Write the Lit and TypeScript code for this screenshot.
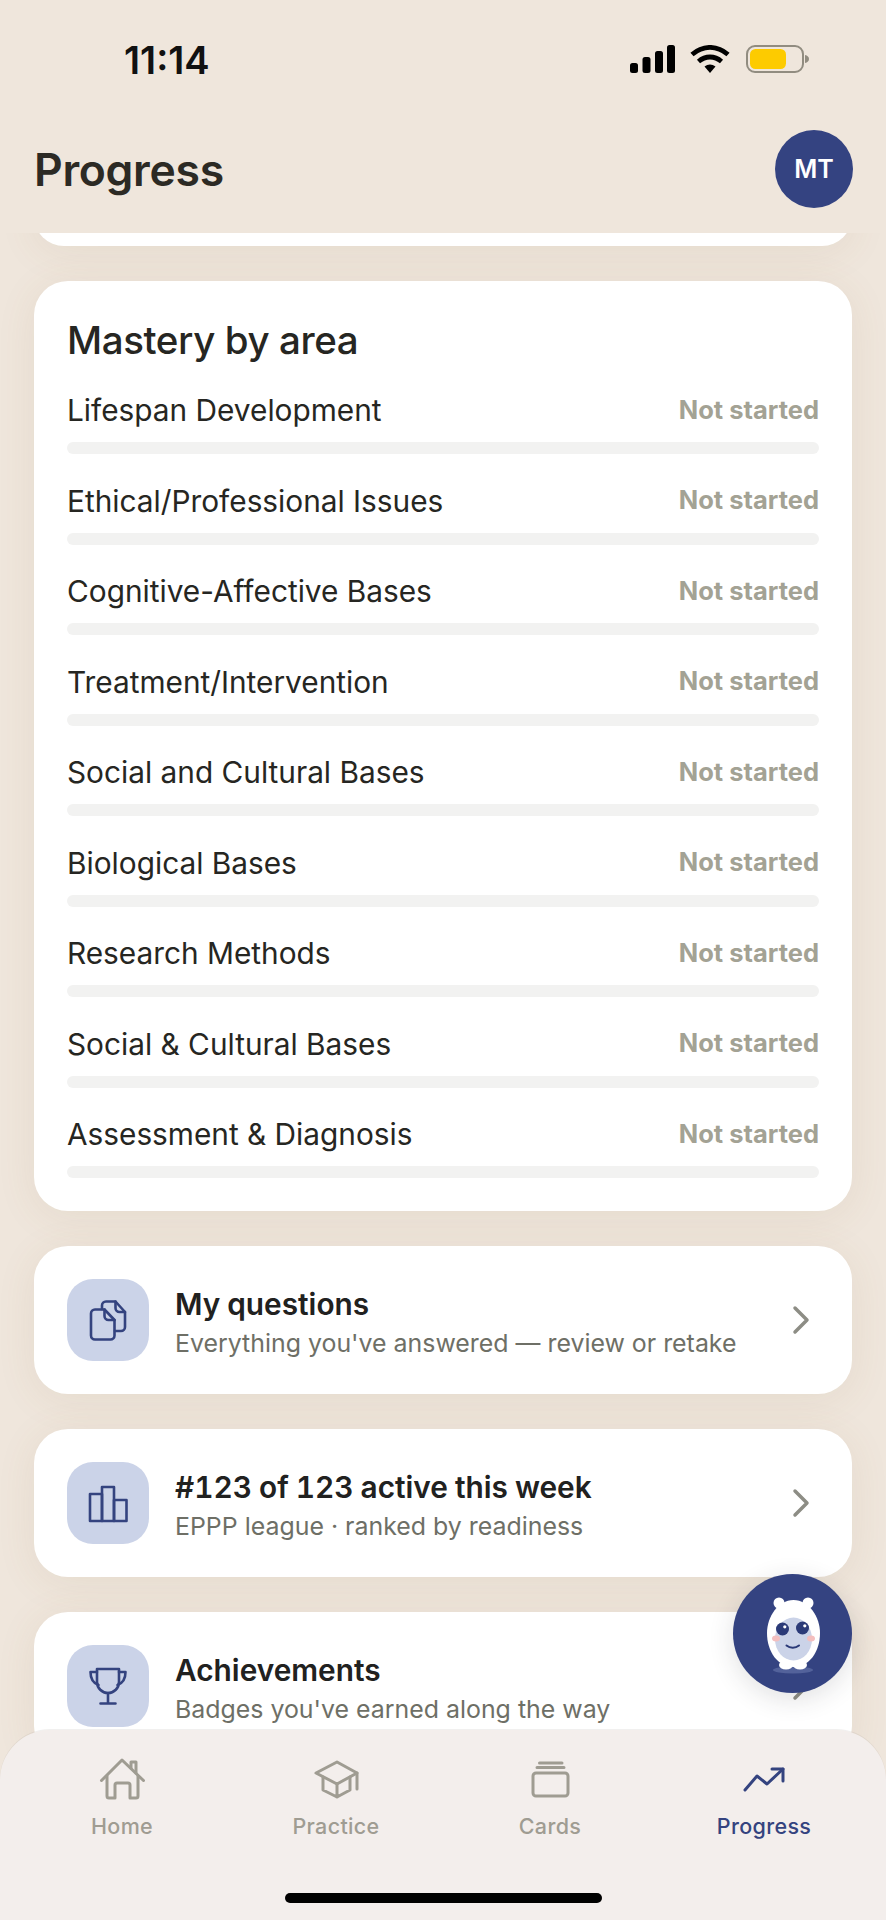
import { LitElement, html, css, svg } from 'lit';
import { customElement } from 'lit/decorators.js';

const AREAS = [
  'Lifespan Development',
  'Ethical/Professional Issues',
  'Cognitive-Affective Bases',
  'Treatment/Intervention',
  'Social and Cultural Bases',
  'Biological Bases',
  'Research Methods',
  'Social & Cultural Bases',
  'Assessment & Diagnosis',
];

// tile glyphs, drawn in the tile's own 82 unit box
const docsIcon = svg`
  <path d="M28 30.5h9.5L47.5 41v15.5a4 4 0 0 1-4 4H28a4 4 0 0 1-4-4v-22a4 4 0 0 1 4-4z" />
  <path d="M37.5 30.5V37a4 4 0 0 0 4 4h6" />
  <path d="M35 30v-3.5a4 4 0 0 1 4-4h9.5L58 33v15a4 4 0 0 1-4 4h-6" />
  <path d="M48.5 22.5V29a4 4 0 0 0 4 4H58" />`;
const barsIcon = svg`
  <path d="M23 59V32h12v27z" />
  <path d="M35 59V25h12v34z" />
  <path d="M47 59V38h12.500v21z" />`;
const trophyIcon = svg`
  <path d="M30 24h22v13a11 11 0 0 1-22 0z" />
  <path d="M30 27h-6.500c0 7 2.500 11 8 13" />
  <path d="M52 27h6.500c0 7-2.500 11-8 13" />
  <path d="M41 48v10M33.500 58.500h15" />`;

const ROWS = [
  { icon: docsIcon, title: 'My questions', sub: "Everything you've answered — review or retake" },
  { icon: barsIcon, title: '#123 of 123 active this week', sub: 'EPPP league · ranked by readiness' },
  { icon: trophyIcon, title: 'Achievements', sub: "Badges you've earned along the way" },
];

const homeIcon = svg`
  <path d="M3.500 24.500 24 4l21.500 20.500" />
  <path d="M9 20v20a2 2 0 0 0 2 2h6V29a2 2 0 0 1 2-2h11a2 2 0 0 1 2 2v13h6a2 2 0 0 0 2-2V20" />
  <path d="M33 12V6h5v11" />`;
const capIcon = svg`
  <path d="M4 17 25 6l20 11-20 11z" />
  <path d="M11 21v13l14 7 13-7V21M25 28v13M45 17v16" />`;
const cardsIcon = svg`
  <rect x="7" y="17" width="35" height="23" rx="3" />
  <path d="M11 11.500h27M13.500 7h22.500" />`;
const trendIcon = svg`
  <path d="M5 34 17 20l10 8 16-15" />
  <path d="M32 13h11v12" />`;

const TABS = [
  { icon: homeIcon, label: 'Home' },
  { icon: capIcon, label: 'Practice' },
  { icon: cardsIcon, label: 'Cards' },
  { icon: trendIcon, label: 'Progress', active: true },
];

@customElement('app-root')
export class AppRoot extends LitElement {
  static styles = css`
    :host {
      display: block;
      position: relative;
      width: 886px;
      height: 1920px;
      overflow: hidden;
      background: #efe6dc;
      font-family: 'Inter', 'Liberation Sans', sans-serif;
      color: #262622;
    }
    .page {
      display: flex;
      flex-direction: column;
      height: 100%;
    }

    .status {
      flex: none;
      height: 110px;
      box-sizing: border-box;
      padding: 38px 76px 0 124px;
      display: flex;
      justify-content: space-between;
      align-items: flex-start;
    }
    .time {
      font-size: 38px;
      line-height: 44px;
      font-weight: 600;
      color: #111;
    }
    .status-icons {
      display: flex;
      margin-top: 7px;
    }
    .status-icons svg {
      display: block;
    }

    .header {
      flex: none;
      height: 123px;
      box-sizing: border-box;
      padding: 20px 33px 0 34px;
      display: flex;
      justify-content: space-between;
      align-items: flex-start;
    }
    .page-title {
      margin: 0;
      font-size: 44.500px;
      line-height: 80px;
      font-weight: 600;
      letter-spacing: -0.3px;
      color: #2c2a24;
    }
    .avatar {
      width: 78px;
      height: 78px;
      border-radius: 50%;
      background: #344381;
      color: #fff;
      display: flex;
      align-items: center;
      justify-content: center;
      font-size: 25px;
      font-weight: 600;
    }

    .scroller {
      flex: 1;
      min-height: 0;
      overflow: hidden;
      padding: 0 34px;
      display: flex;
      flex-direction: column;
      gap: 35px;
    }
    .card {
      flex: none;
      background: #fff;
      border-radius: 34px;
      box-shadow: 0 6px 40px rgba(130, 100, 60, 0.09);
    }
    .stub {
      height: 60px;
      margin-top: -47px;
    }
    .mastery {
      height: 930px;
      box-sizing: border-box;
      padding: 33px 33px 0 33px;
    }
    .mastery h2 {
      margin: 0;
      font-size: 38.500px;
      line-height: 52px;
      font-weight: 500;
      letter-spacing: -0.4px;
    }
    .areas {
      margin-top: 24px;
      display: flex;
      flex-direction: column;
      gap: 26.500px;
    }
    .area-head {
      display: flex;
      justify-content: space-between;
      align-items: center;
      height: 40px;
      margin-bottom: 12px;
    }
    .area-name {
      font-size: 29.800px;
    }
    .area-state {
      font-size: 25.500px;
      font-weight: 700;
      color: #a3a294;
      margin-bottom: 2px;
    }
    .track {
      height: 12px;
      border-radius: 6px;
      background: #f2f2f1;
    }

    .row {
      height: 148px;
      box-sizing: border-box;
      padding: 0 41px 0 33px;
      display: flex;
      align-items: center;
    }
    .tile {
      flex: none;
      width: 82px;
      height: 82px;
      border-radius: 26px;
      background: #cbd3e8;
    }
    .tile svg {
      display: block;
      fill: none;
      stroke: #34437f;
      stroke-width: 2.600;
      stroke-linejoin: round;
      stroke-linecap: round;
    }
    .row-text {
      flex: 1;
      min-width: 0;
      margin-left: 26px;
      padding-top: 4px;
    }
    .row-title {
      font-size: 29.800px;
      line-height: 40px;
      font-weight: 600;
      font-variant-numeric: tabular-nums;
      word-spacing: -1px;
      color: #212120;
    }
    .row-sub {
      font-size: 24.900px;
      line-height: 36px;
      color: #6e6f66;
      margin-top: 1px;
    }
    .chevron {
      flex: none;
      display: block;
      fill: none;
      stroke: #8d8d85;
      stroke-width: 3.500;
      stroke-linecap: round;
      stroke-linejoin: round;
    }

    .fab {
      position: absolute;
      left: 733px;
      top: 1574px;
      width: 119px;
      height: 119px;
      border-radius: 50%;
      background: #344381;
      box-shadow: 0 6px 26px rgba(40, 40, 50, 0.14);
      display: flex;
      align-items: center;
      justify-content: center;
    }

    .tabbar {
      position: absolute;
      left: 0;
      right: 0;
      bottom: 0;
      height: 190px;
      box-sizing: border-box;
      padding: 26px 15px 0;
      border-radius: 50px 50px 0 0;
      background: #f3eeec;
      box-shadow: 0 -1px 0 rgba(120, 110, 100, 0.1);
      display: grid;
      grid-template-columns: repeat(4, 1fr);
      align-items: start;
    }
    .tab {
      display: flex;
      flex-direction: column;
      align-items: center;
      color: #9f9c92;
      font-size: 21.500px;
      line-height: 30px;
      font-weight: 500;
      letter-spacing: 0.35px;
    }
    .tab svg {
      display: block;
      margin-bottom: 7px;
      fill: none;
      stroke: currentColor;
      stroke-width: 3;
      stroke-linejoin: round;
      stroke-linecap: round;
    }
    .tab.active {
      color: #34437f;
    }
    .home-bar {
      position: absolute;
      left: 285px;
      bottom: 17px;
      width: 317px;
      height: 10px;
      border-radius: 5px;
      background: #000;
    }
  `;

  private renderStatusIcons() {
    return html`
      <div class="status-icons">
        <svg width="180" height="28" viewBox="0 0 180 28">
          <rect x="0" y="18" width="8" height="10" rx="2.500" fill="#000" />
          <rect x="12.500" y="12" width="8" height="16" rx="2.500" fill="#000" />
          <rect x="25" y="6" width="8" height="22" rx="2.500" fill="#000" />
          <rect x="37" y="0" width="8" height="28" rx="2.500" fill="#000" />
          <g fill="none" stroke="#000" stroke-width="4.800">
            <path d="M62 9.500c11-9.500 25-9.500 36 0" />
            <path d="M68.500 16.500c7-6 16-6 23 0" />
          </g>
          <path d="M74.500 21.500c3.500-2.800 7.500-2.800 11 0L80 28z" fill="#000" />
          <rect x="117" y="1" width="56" height="26" rx="8" fill="none" stroke="#918c80" stroke-width="2" />
          <rect x="120" y="4" width="36" height="20" rx="5.500" fill="#fdcb00" />
          <path d="M175 10c2.500 .5 4 2 4 4s-1.500 3.500-4 4z" fill="#918c80" />
        </svg>
      </div>
    `;
  }

  private renderMascot() {
    return html`
      <svg width="106" height="106" viewBox="0 0 106 106">
        <ellipse cx="53" cy="89" rx="20" ry="3.500" fill="#53629b" />
        <circle cx="39" cy="22" r="5.500" fill="#fff" />
        <circle cx="68" cy="22" r="5.500" fill="#fff" />
        <ellipse cx="46" cy="84" rx="7" ry="4.500" fill="#fff" />
        <ellipse cx="60" cy="84" rx="7" ry="4.500" fill="#fff" />
        <path d="M53.500 19C38 19 27 36 27 52c0 19 11 34 26.500 34S80 71 80 52C80 36 69 19 53.500 19z" fill="#fff" />
        <ellipse cx="53.500" cy="58" rx="18.500" ry="21.500" fill="#cbd3e8" />
        <ellipse cx="36" cy="57.500" rx="4" ry="3" fill="#f4bfbf" />
        <ellipse cx="71" cy="57.500" rx="4" ry="3" fill="#f4bfbf" />
        <circle cx="42.500" cy="48" r="6.500" fill="#2b3a78" />
        <circle cx="62.500" cy="47" r="6.500" fill="#2b3a78" />
        <circle cx="44.800" cy="45.800" r="1.600" fill="#fff" />
        <circle cx="64.800" cy="44.800" r="1.600" fill="#fff" />
        <path d="M46.500 64.500c3.500 3 9 3 12.500 0" fill="none" stroke="#2b3a78" stroke-width="2" stroke-linecap="round" />
      </svg>
    `;
  }

  render() {
    return html`
      <div class="page">
        <div class="status">
          <span class="time">11:14</span>
          ${this.renderStatusIcons()}
        </div>
        <header class="header">
          <h1 class="page-title">Progress</h1>
          <div class="avatar">MT</div>
        </header>
        <div class="scroller">
          <div class="card stub"></div>
          <section class="card mastery">
            <h2>Mastery by area</h2>
            <div class="areas">
              ${AREAS.map(
                (name) => html`
                  <div>
                    <div class="area-head">
                      <span class="area-name">${name}</span>
                      <span class="area-state">Not started</span>
                    </div>
                    <div class="track"></div>
                  </div>
                `,
              )}
            </div>
          </section>
          ${ROWS.map(
            (row) => html`
              <div class="card row">
                <div class="tile"><svg width="82" height="82" viewBox="0 0 82 82">${row.icon}</svg></div>
                <div class="row-text">
                  <div class="row-title">${row.title}</div>
                  <div class="row-sub">${row.sub}</div>
                </div>
                <svg class="chevron" width="20" height="30" viewBox="0 0 20 30"><path d="M4 3l12 12L4 27" /></svg>
              </div>
            `,
          )}
        </div>
      </div>
      <div class="fab">${this.renderMascot()}</div>
      <nav class="tabbar">
        ${TABS.map(
          (tab) => html`
            <div class="tab ${tab.active ? 'active' : ''}">
              <svg width="48" height="48" viewBox="0 0 48 48">${tab.icon}</svg>
              <span>${tab.label}</span>
            </div>
          `,
        )}
      </nav>
      <div class="home-bar"></div>
    `;
  }
}
